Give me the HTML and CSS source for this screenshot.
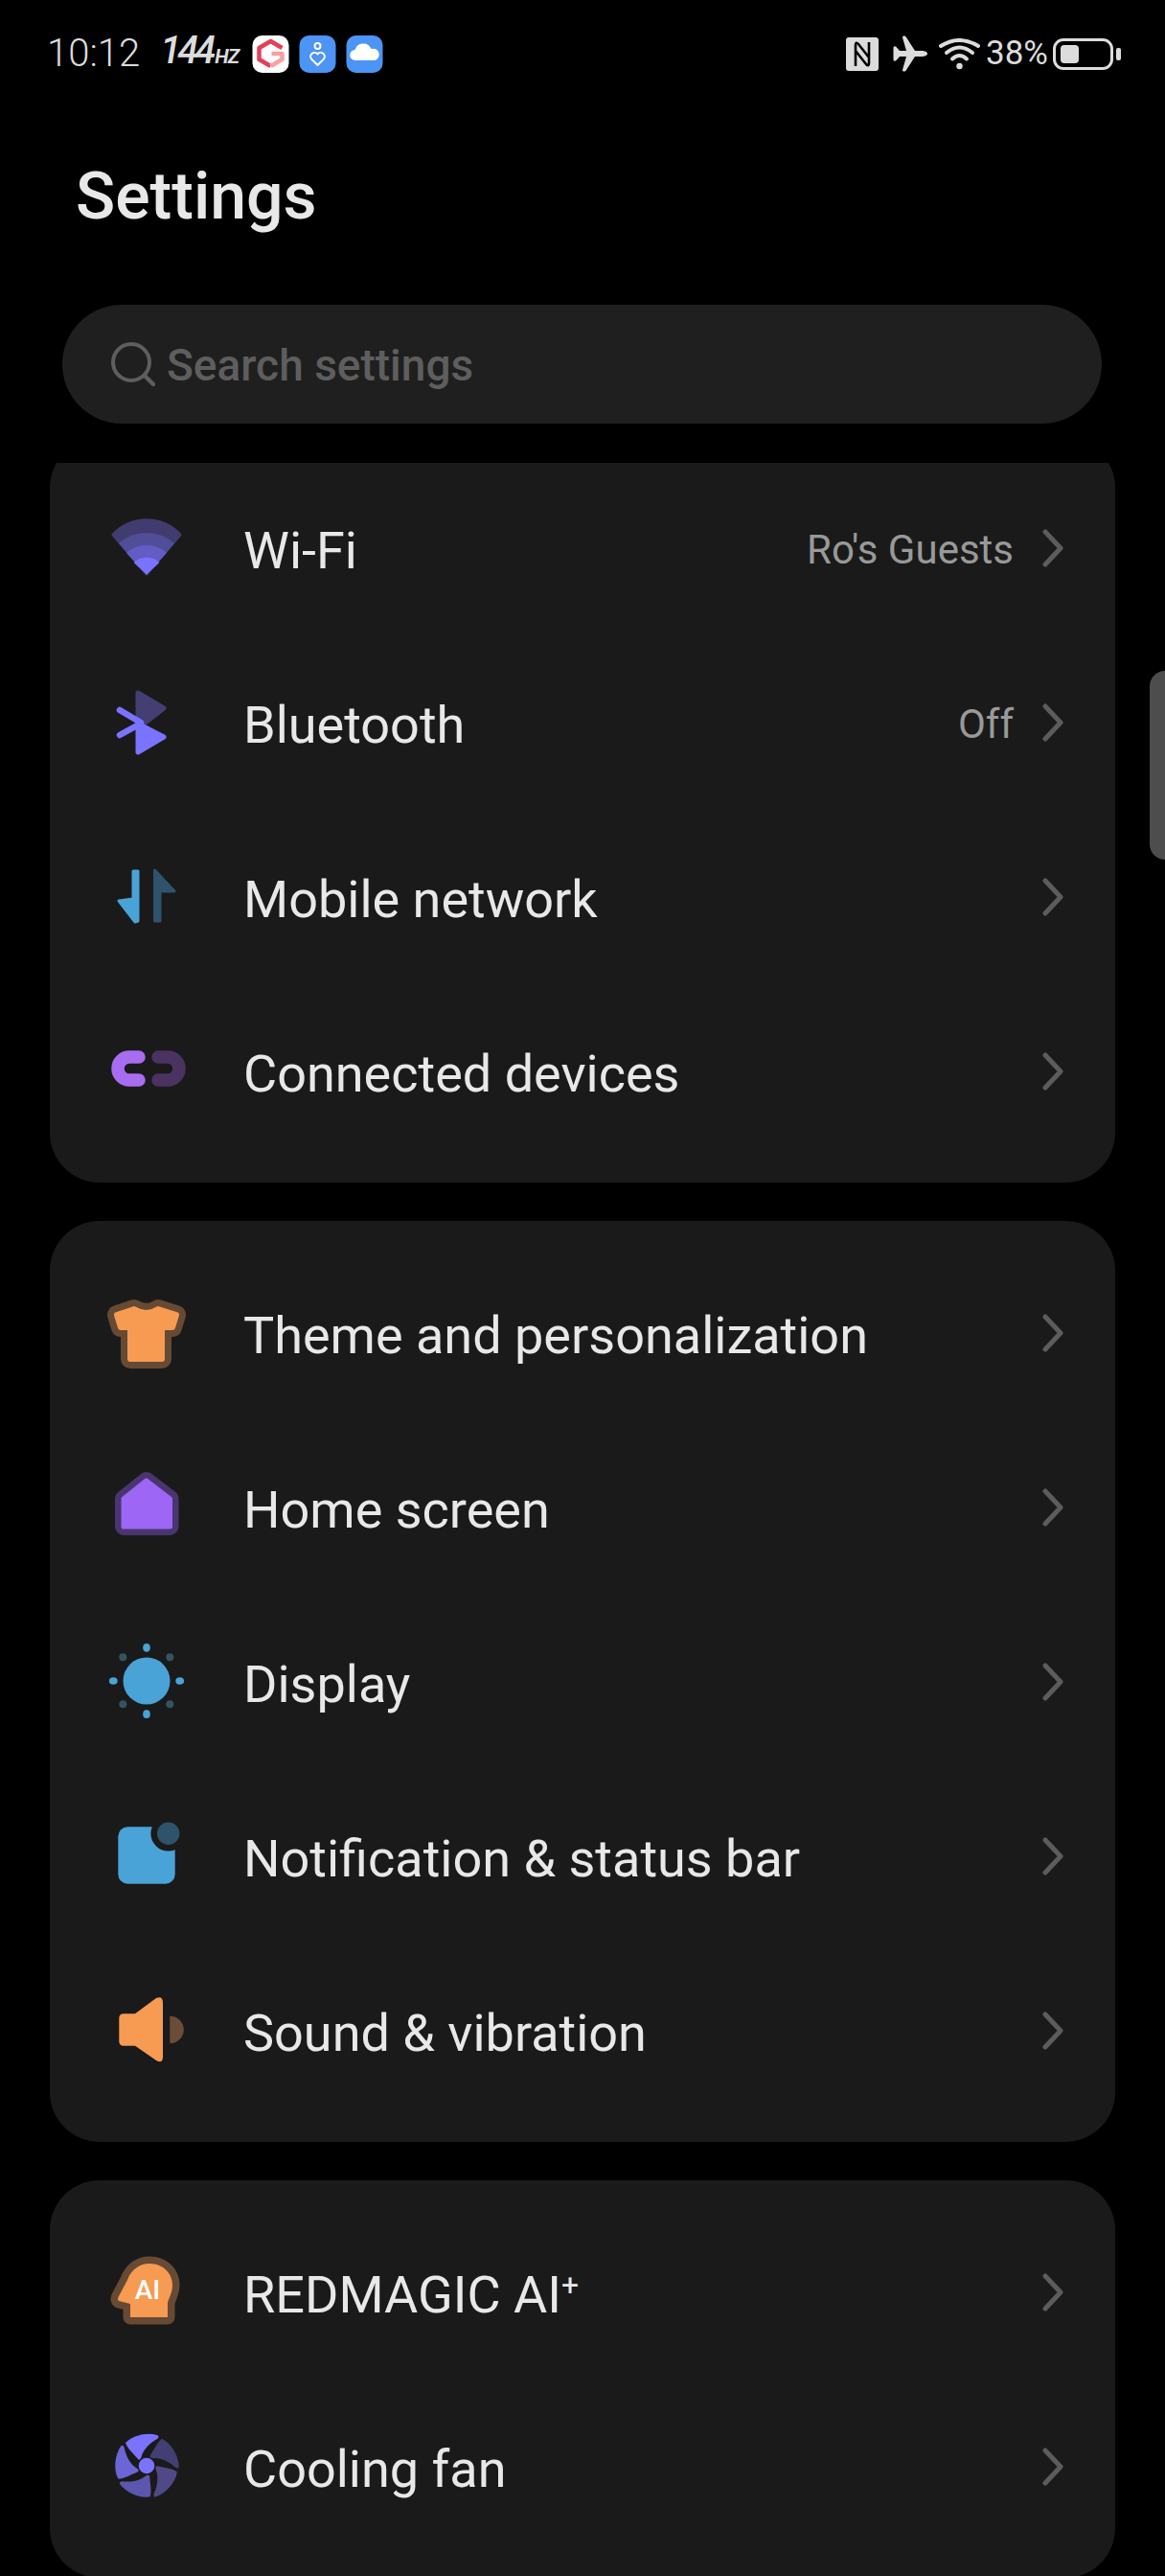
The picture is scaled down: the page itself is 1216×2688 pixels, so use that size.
FILE: index.html
```html
<!DOCTYPE html>
<html>

<head>
    <meta charset="UTF-8">
    <title>Settings</title>
    <link rel="stylesheet" href="styles.css">
</head>

<body>
    <svg class="sprites" width="0" height="0">
        <symbol id="chevron" viewBox="0 0 24 40">
            <path d="M5 3 L21 20 L5 37" fill="none" stroke="#5c5c5c" stroke-width="5" stroke-linecap="round" stroke-linejoin="round"/>
        </symbol>
    </svg>

    <div class="screen">
        <div class="statusbar">
            <span class="time">10:12</span>
            <span class="hz">144<small>HZ</small></span>
            <div class="apps">
                <svg class="app" viewBox="0 0 38 39">
                    <rect width="38" height="39" rx="10" fill="#fff"/>
                    <path d="M31 13 L19 6 L7 13 V25 L19 32" fill="none" stroke="#e3405a" stroke-width="4.5" stroke-linejoin="round"/>
                    <path d="M19 32 L31 25 V19 H20" fill="none" stroke="#f7a0a4" stroke-width="4.5" stroke-linejoin="round"/>
                </svg>
                <svg class="app" viewBox="0 0 38 39">
                    <rect width="38" height="39" rx="10" fill="#4c94f5"/>
                    <circle cx="19" cy="11" r="3" fill="none" stroke="#fff" stroke-width="2"/>
                    <path d="M19 31 L12.5 24.5 a4 4 0 0 1 6.5 -5 a4 4 0 0 1 6.5 5 Z" fill="none" stroke="#fff" stroke-width="2" stroke-linejoin="round"/>
                </svg>
                <svg class="app" viewBox="0 0 38 39">
                    <rect width="38" height="39" rx="10" fill="#4c94f5"/>
                    <path d="M9.5 26 a5.5 5.5 0 0 1 -.5 -11 a9 9 0 0 1 17 -1 a6.2 6.2 0 0 1 4 12 z" fill="#fff"/>
                </svg>
            </div>
            <div class="sysicons">
                <svg class="nfc" viewBox="0 0 34 35">
                    <rect width="34" height="35" rx="3" fill="#dcdcdc"/>
                    <path d="M10 30 V8 Q10 4 13 7 L24 21 M24 5 V27 Q24 31 21 28 L10 14" fill="none" stroke="#000" stroke-width="2.6"/>
                </svg>
                <svg class="plane" viewBox="0 0 38 38">
                    <path d="M37 19 C37 17 34 16 31 16 H24 L15 2 C14 0 11 0 11 2 L15 16 H8 L4.5 12 C3.5 11 1.5 11 1.5 13 V25 C1.5 27 3.5 27 4.5 26 L8 22 H15 L11 36 C11 38 14 38 15 36 L24 22 H31 C34 22 37 21 37 19Z" fill="#dcdcdc"/>
                </svg>
                <svg class="wifi" viewBox="0 0 43 33">
                    <g fill="none" stroke="#dcdcdc" stroke-width="4" stroke-linecap="round">
                        <path d="M2 8 Q21.5 -4 41 8"/>
                        <path d="M8 15 Q21.5 4 35 15"/>
                        <path d="M14 21.5 Q21.5 14.5 29 21.5"/>
                    </g>
                    <circle cx="21.5" cy="29" r="3.2" fill="#dcdcdc"/>
                </svg>
                <span class="percent">38%</span>
                <div class="battery"><div class="battery-level"></div></div>
                <div class="battery-nub"></div>
            </div>
        </div>

        <h1 class="title">Settings</h1>

        <div class="search">
            <svg class="search-icon" viewBox="0 0 46 46">
                <circle cx="21" cy="21" r="19" fill="none" stroke="#5e5e5e" stroke-width="4"/>
                <path d="M35 35 L44 44" stroke="#5e5e5e" stroke-width="4.5" stroke-linecap="round"/>
            </svg>
            <span class="search-text">Search settings</span>
        </div>

        <div class="list">
            <div class="card card-first">
                <div class="row">
                    <svg class="icon" viewBox="0 0 84 84">
                        <path d="M42 68 L7 27 A48 48 0 0 1 77 27 Z" fill="#413c70" stroke="#413c70" stroke-width="3" stroke-linejoin="round"/>
                        <path d="M42 69 L13 36 A43.7 43.7 0 0 1 71 36 Z" fill="#524d99"/>
                        <path d="M42 69 L21 46 A31.6 31.6 0 0 1 63 46 Z" fill="#625cc4"/>
                        <path d="M42 67 L30 56 A19.4 19.4 0 0 1 54 56 Z" fill="#7a73ff" stroke="#7a73ff" stroke-width="2" stroke-linejoin="round"/>
                    </svg>
                    <span class="label">Wi-Fi</span>
                    <span class="value">Ro's Guests</span>
                    <svg class="chevron"><use href="#chevron"/></svg>
                </div>
                <div class="row">
                    <svg class="icon" viewBox="0 0 84 84">
                        <path d="M33 10 L60 26 L33 47 Z" fill="#433f72" stroke="#433f72" stroke-width="5" stroke-linejoin="round"/>
                        <path d="M33 42 L60 56 L33 72 Z" fill="#7a73ff" stroke="#7a73ff" stroke-width="5" stroke-linejoin="round"/>
                        <path d="M14 28 L36 41 M14 54 L34 43" fill="none" stroke="#7a73ff" stroke-width="6.5" stroke-linecap="round"/>
                    </svg>
                    <span class="label">Bluetooth</span>
                    <span class="value">Off</span>
                    <svg class="chevron"><use href="#chevron"/></svg>
                </div>
                <div class="row">
                    <svg class="icon" viewBox="0 0 84 84">
                        <path d="M28 14 H33 V66 L30 67 L13 45 L28 43 Z" fill="#4aa3d6" stroke="#4aa3d6" stroke-width="3" stroke-linejoin="round"/>
                        <path d="M50.5 13 L71 35 L56 35 V66 H50.5 Z" fill="#2e536b" stroke="#2e536b" stroke-width="3" stroke-linejoin="round"/>
                    </svg>
                    <span class="label">Mobile network</span>
                    <svg class="chevron"><use href="#chevron"/></svg>
                </div>
                <div class="row">
                    <svg class="icon" viewBox="0 0 84 84">
                        <path d="M34 26 H24 a12 12 0 0 0 0 24 H34" fill="none" stroke="#a86cf0" stroke-width="13.5" stroke-linecap="round"/>
                        <path d="M54 26 H64 a12 12 0 0 1 0 24 H54" fill="none" stroke="#4a3361" stroke-width="13.5" stroke-linecap="round"/>
                    </svg>
                    <span class="label">Connected devices</span>
                    <svg class="chevron"><use href="#chevron"/></svg>
                </div>
            </div>

            <div class="card">
                <div class="row">
                    <svg class="icon" viewBox="0 0 84 84">
                        <path d="M11 22 L29 16 Q42 24 54 16 L73 22 L69 35 H58 V68 H25 V35 H15 Z" fill="#664a33" stroke="#664a33" stroke-width="20" stroke-linejoin="round"/>
                        <path d="M11 22 L29 16 Q42 24 54 16 L73 22 L69 35 H58 V68 H25 V35 H15 Z" fill="#f79a52" stroke="#f79a52" stroke-width="6" stroke-linejoin="round"/>
                    </svg>
                    <span class="label">Theme and personalization</span>
                    <svg class="chevron"><use href="#chevron"/></svg>
                </div>
                <div class="row">
                    <svg class="icon" viewBox="0 0 84 84">
                        <path d="M41.7 13 L66.5 32 V61 H18 V32 Z" fill="#49356f" stroke="#49356f" stroke-width="18" stroke-linejoin="round"/>
                        <path d="M41.7 13 L66.5 32 V61 H18 V32 Z" fill="#9d66f5" stroke="#9d66f5" stroke-width="5" stroke-linejoin="round"/>
                    </svg>
                    <span class="label">Home screen</span>
                    <svg class="chevron"><use href="#chevron"/></svg>
                </div>
                <div class="row">
                    <svg class="icon" viewBox="0 0 84 84">
                        <circle cx="42" cy="40" r="24.5" fill="#4aa3d6"/>
                        <g fill="#4aa3d6">
                            <ellipse cx="42" cy="5.3" rx="3.8" ry="4.4"/>
                            <ellipse cx="42" cy="74.7" rx="3.8" ry="4.4"/>
                            <ellipse cx="7.3" cy="40" rx="4.4" ry="3.8"/>
                            <ellipse cx="76.7" cy="40" rx="4.4" ry="3.8"/>
                        </g>
                        <g fill="#365262">
                            <circle cx="17.3" cy="15.3" r="4"/>
                            <circle cx="66.3" cy="15.3" r="4"/>
                            <circle cx="17.3" cy="64.3" r="4"/>
                            <circle cx="66.3" cy="64.3" r="4"/>
                        </g>
                    </svg>
                    <span class="label">Display</span>
                    <svg class="chevron"><use href="#chevron"/></svg>
                </div>
                <div class="row">
                    <svg class="icon" viewBox="0 0 84 84">
                        <rect x="12.3" y="10.3" width="59.4" height="59.4" rx="10" fill="#4aa3d6"/>
                        <circle cx="64.7" cy="17.3" r="18.3" fill="#1a1a1a"/>
                        <circle cx="64.7" cy="17.3" r="11.7" fill="#2e536b"/>
                    </svg>
                    <span class="label">Notification &amp; status bar</span>
                    <svg class="chevron"><use href="#chevron"/></svg>
                </div>
                <div class="row">
                    <svg class="icon" viewBox="0 0 84 84">
                        <path d="M18 23.3 H30 L52 7 Q59 4 59 12 V68 Q59 76 52 72 L30 56.7 H18 Q13.3 56.7 13.3 52 V28 Q13.3 23.3 18 23.3Z" fill="#f79a52"/>
                        <path d="M66.3 25.7 a14.5 14.3 0 0 1 0 28.6Z" fill="#6b4d37"/>
                    </svg>
                    <span class="label">Sound &amp; vibration</span>
                    <svg class="chevron"><use href="#chevron"/></svg>
                </div>
            </div>

            <div class="card">
                <div class="row">
                    <svg class="icon" viewBox="0 0 84 84">
                        <path d="M25 67 V53 L13 50 Q11 48 13 45 L22 28 C26 17 35 11 45 11 C60 11 69 22 69 33 C69 42 65 47 64 52 V67 Z" fill="#664a33" stroke="#664a33" stroke-width="15" stroke-linejoin="round"/>
                        <path d="M25 67 V53 L13 50 Q11 48 13 45 L22 28 C26 17 35 11 45 11 C60 11 69 22 69 33 C69 42 65 47 64 52 V67 Z" fill="#f79a52"/>
                        <text class="ai-mark" x="43" y="48" text-anchor="middle">AI</text>
                    </svg>
                    <span class="label">REDMAGIC AI<sup class="plus">+</sup></span>
                    <svg class="chevron"><use href="#chevron"/></svg>
                </div>
                <div class="row">
                    <svg class="icon" viewBox="0 0 84 84">
                        <defs>
                            <path id="blade" d="M33 33 C28 27 22 22 20 16 C28 8 42 5 53 8 C55 9 55 10 53 12 C45 16 38 24 36.5 31 Q35 35 33 33 Z"/>
                        </defs>
                        <use href="#blade" fill="#7a73ff"/>
                        <use href="#blade" fill="#433f72" transform="rotate(72 42 40)"/>
                        <use href="#blade" fill="#4f4a87" transform="rotate(144 42 40)"/>
                        <use href="#blade" fill="#5c56ae" transform="rotate(216 42 40)"/>
                        <use href="#blade" fill="#6b65d6" transform="rotate(288 42 40)"/>
                        <circle cx="42" cy="40" r="8.3" fill="#7a73ff"/>
                    </svg>
                    <span class="label">Cooling fan</span>
                    <svg class="chevron"><use href="#chevron"/></svg>
                </div>
            </div>
        </div>

        <div class="side-handle"></div>
    </div>
</body>

</html>
```

FILE: styles.css
```css
* {
    box-sizing: border-box;
    margin: 0;
    padding: 0;
}

body {
    background-color: #000;
    color: #e8e8e8;
    font-family: Roboto, "Liberation Sans", sans-serif;
}

.sprites {
    position: absolute;
}

.screen {
    position: relative;
    width: 1216px;
    height: 2688px;
    overflow: hidden;
    display: flex;
    flex-direction: column;
}

/* status bar */

.statusbar {
    display: flex;
    align-items: center;
    height: 112px;
    padding: 0 46px 0 49px;
    color: #dcdcdc;
}

.time {
    font-size: 40px;
    line-height: 40px;
    font-weight: 300;
}

.hz {
    margin-left: 21px;
    font-size: 40px;
    line-height: 40px;
    font-weight: 500;
    font-style: italic;
    letter-spacing: -4px;
}

.hz small {
    margin-left: 3px;
    font-size: 21px;
    font-weight: 700;
    letter-spacing: -1px;
}

.apps {
    display: flex;
    gap: 10px;
    margin-left: 14px;
}

.app {
    width: 39px;
    height: 39px;
}

.sysicons {
    display: flex;
    align-items: center;
    margin-left: auto;
}

.nfc {
    width: 34px;
    height: 35px;
}

.plane {
    width: 38px;
    height: 38px;
    margin-left: 14px;
}

.wifi {
    width: 43px;
    height: 33px;
    margin-left: 11px;
}

.percent {
    margin-left: 6px;
    font-size: 35px;
    line-height: 40px;
}

.battery {
    width: 63px;
    height: 33px;
    margin-left: 5px;
    padding: 4px 5px;
    border: 3px solid #dcdcdc;
    border-radius: 11px;
}

.battery-level {
    width: 19px;
    height: 100%;
    background-color: #dcdcdc;
    border-radius: 4px;
}

.battery-nub {
    width: 5px;
    height: 13px;
    margin-left: 3px;
    background-color: #dcdcdc;
    border-radius: 2px;
}

/* header */

.title {
    margin: 54px 0 0 79px;
    font-size: 68px;
    line-height: 78px;
    font-weight: 500;
}

.search {
    display: flex;
    align-items: center;
    height: 124px;
    margin: 74px 66px 0 65px;
    padding-left: 51px;
    background-color: #1f1f1f;
    border-radius: 62px;
}

.search-icon {
    width: 46px;
    height: 46px;
}

.search-text {
    margin-left: 12px;
    padding-top: 2px;
    color: #5e5e5e;
    font-size: 46px;
    font-weight: 500;
}

/* list */

.list {
    flex: 1;
    margin-top: 41px;
    overflow: hidden;
    padding: 0 52px;
}

.card {
    margin-bottom: 40px;
    padding: 27px 0 24px;
    background-color: #1a1a1a;
    border-radius: 52px;
}

.card-first {
    margin-top: -26px;
    padding-top: 25px;
}

.row {
    display: flex;
    align-items: center;
    height: 182px;
    padding: 0 54px 0 59px;
}

.icon {
    flex-shrink: 0;
    width: 84px;
    height: 84px;
    margin-right: 59px;
}

.ai-mark {
    fill: #fff;
    font-size: 28px;
    font-weight: 500;
    font-family: Roboto, sans-serif;
}

.label {
    flex: 1;
    padding-top: 4px;
    font-size: 54px;
    line-height: 64px;
}

.plus {
    font-size: 32px;
    line-height: 0;
    vertical-align: 18px;
}

.value {
    margin-right: 28px;
    color: #999;
    font-size: 42px;
}

.chevron {
    width: 24px;
    height: 40px;
    margin-top: -2px;
}

.side-handle {
    position: absolute;
    top: 700px;
    right: 0;
    width: 16px;
    height: 197px;
    background-color: #4d4d4d;
    border-radius: 20px 0 0 20px;
}
```
